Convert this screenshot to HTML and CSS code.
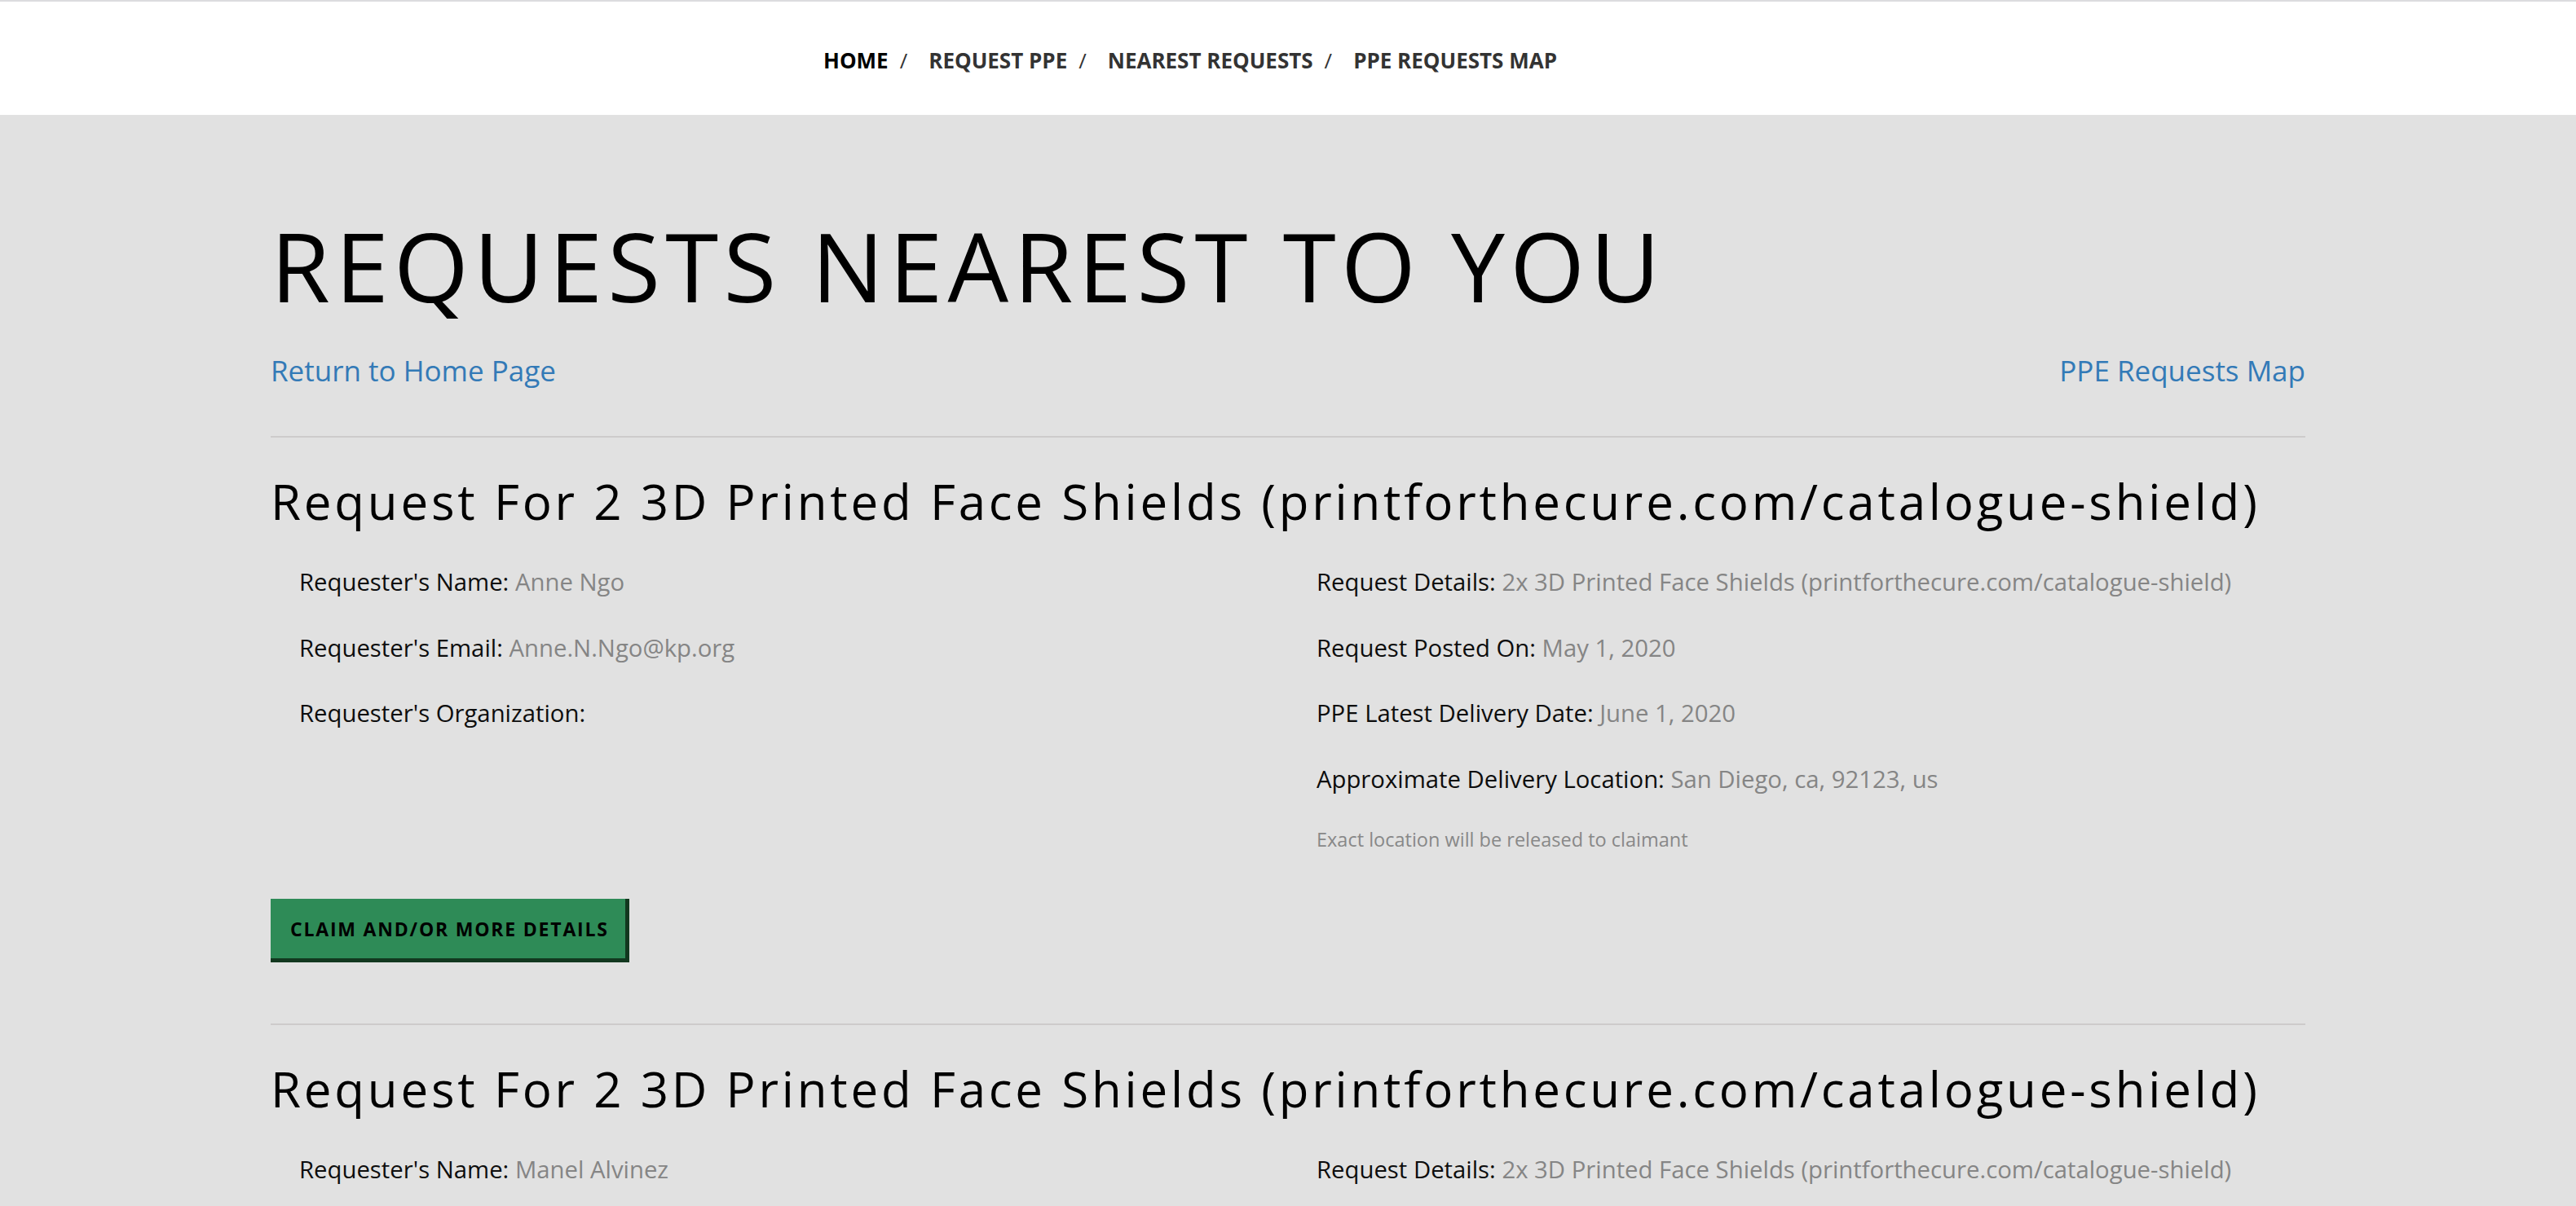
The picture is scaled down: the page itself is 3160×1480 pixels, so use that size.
FILE: index.html
```html
<!DOCTYPE html>
<html lang="en">
<head>
<meta charset="utf-8">
<title>Requests Nearest To You</title>
<link rel="stylesheet" href="styles.css">
</head>
<body>
<header class="topbar">
  <nav class="crumbs">
    <a class="crumb crumb-active" href="#">Home</a>
    <a class="crumb" href="#">Request PPE</a>
    <a class="crumb" href="#">Nearest Requests</a>
    <a class="crumb" href="#">PPE Requests Map</a>
  </nav>
</header>
<main class="page">
  <h1 class="page-title">Requests Nearest To You</h1>
  <div class="links">
    <a class="link" href="#">Return to Home Page</a>
    <a class="link" href="#">PPE Requests Map</a>
  </div>

  <section class="request">
    <h2 class="request-title">Request For 2 3D Printed Face Shields (printforthecure.com/catalogue-shield)</h2>
    <div class="cols">
      <div class="col">
        <div class="row"><span class="label">Requester's Name:</span> <span class="value">Anne Ngo</span></div>
        <div class="row"><span class="label">Requester's Email:</span> <span class="value">Anne.N.Ngo@kp.org</span></div>
        <div class="row"><span class="label">Requester's Organization:</span> <span class="value"></span></div>
      </div>
      <div class="col">
        <div class="row"><span class="label">Request Details:</span> <span class="value">2x 3D Printed Face Shields (printforthecure.com/catalogue-shield)</span></div>
        <div class="row"><span class="label">Request Posted On:</span> <span class="value">May 1, 2020</span></div>
        <div class="row"><span class="label">PPE Latest Delivery Date:</span> <span class="value">June 1, 2020</span></div>
        <div class="row"><span class="label">Approximate Delivery Location:</span> <span class="value">San Diego, ca, 92123, us</span></div>
        <div class="note">Exact location will be released to claimant</div>
      </div>
    </div>
    <a class="claim" href="#">Claim and/or more details</a>
  </section>

  <section class="request">
    <h2 class="request-title">Request For 2 3D Printed Face Shields (printforthecure.com/catalogue-shield)</h2>
    <div class="cols">
      <div class="col">
        <div class="row"><span class="label">Requester's Name:</span> <span class="value">Manel Alvinez</span></div>
      </div>
      <div class="col">
        <div class="row"><span class="label">Request Details:</span> <span class="value">2x 3D Printed Face Shields (printforthecure.com/catalogue-shield)</span></div>
      </div>
    </div>
  </section>
</main>
</body>
</html>
```

FILE: styles.css
```css
* {
  box-sizing: border-box;
}

html, body {
  margin: 0;
  padding: 0;
}

body {
  background: #e1e1e1;
  font-family: "Open Sans", "Noto Sans", "Liberation Sans", sans-serif;
  color: #111;
  height: 1480px;
  overflow: hidden;
}

.topbar {
  background: #ffffff;
  border-top: 2px solid #dcdcdf;
  height: 141px;
  display: flex;
  align-items: center;
  padding-left: 1010px;
  padding-top: 4px;
}

.crumbs {
  display: flex;
  align-items: center;
}

.crumb {
  font-size: 26px;
  font-weight: 700;
  text-transform: uppercase;
  color: #333333;
  text-decoration: none;
  line-height: 1;
}

.crumb-active {
  color: #000000;
}

.crumb + .crumb::before {
  content: "/";
  font-weight: 400;
  color: #333333;
  padding: 0 26px 0 14px;
}

.page {
  width: 2496px;
  margin: 0 auto;
}

.page-title {
  margin: 126px 0 0;
  font-size: 118px;
  line-height: 118px;
  font-weight: 400;
  letter-spacing: 6.3px;
  text-transform: uppercase;
  color: #000;
}

.links {
  display: flex;
  justify-content: space-between;
  margin-top: 52px;
  padding-bottom: 63px;
}

.link {
  font-size: 35px;
  line-height: 35px;
  color: #337ab7;
  text-decoration: none;
}

.request {
  border-top: 2px solid #cdcbcb;
  padding-top: 48px;
  padding-bottom: 75px;
}

.request-title {
  margin: 0;
  font-size: 60px;
  line-height: 60px;
  font-weight: 400;
  letter-spacing: 3.8px;
  color: #000;
  white-space: nowrap;
}

.cols {
  display: grid;
  grid-template-columns: 1fr 1fr;
  margin-top: 49px;
}

.col {
  padding-left: 35px;
}

.row {
  font-size: 29.3px;
  line-height: 40px;
  margin-bottom: 40.5px;
  white-space: nowrap;
}

.label {
  color: #0d0d0d;
}

.value {
  color: #858585;
}

.note {
  font-size: 23.5px;
  line-height: 30px;
  color: #888888;
  margin-top: -1px;
}

.claim {
  display: inline-block;
  margin-top: 58px;
  background: #2e8b57;
  border-right: 5px solid #12381f;
  border-bottom: 5px solid #12381f;
  padding: 0 20px 0 24px;
  height: 78px;
  line-height: 74px;
  font-size: 23px;
  font-weight: 700;
  letter-spacing: 1.8px;
  text-transform: uppercase;
  color: #000;
  text-decoration: none;
  white-space: nowrap;
}
```
